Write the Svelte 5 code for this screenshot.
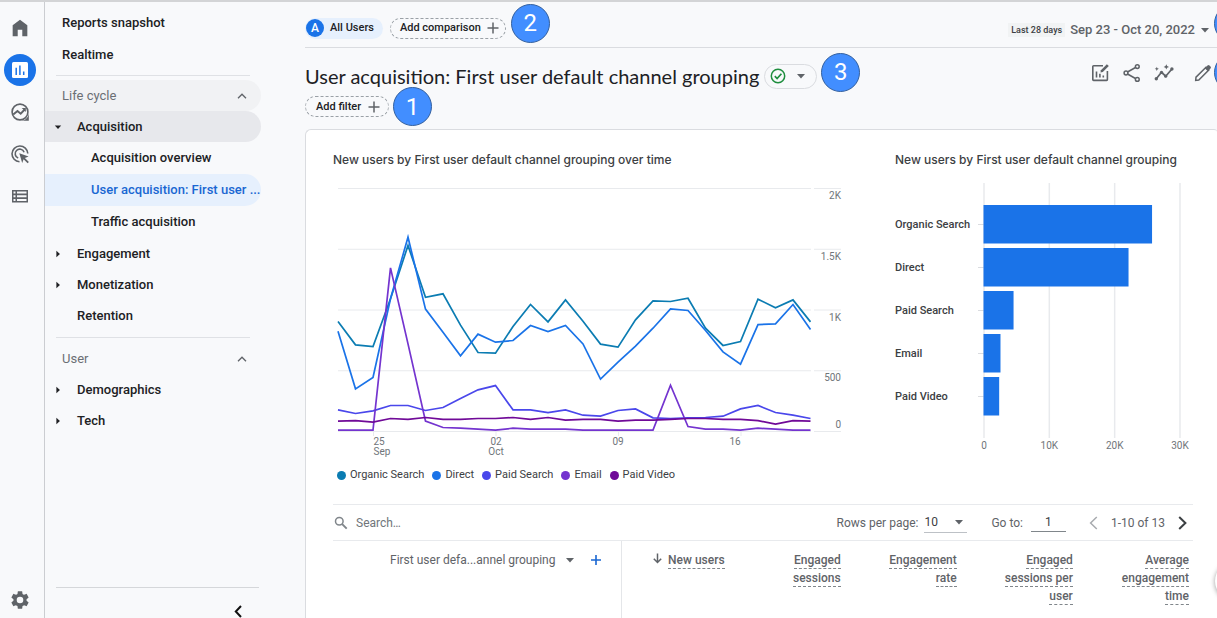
<script>
  const series = [
    { name: 'Organic Search', color: '#0b7cb2', values: [901, 709, 695, 1088, 1527, 1101, 1129, 871, 646, 641, 860, 1041, 898, 1079, 904, 715, 690, 915, 1071, 1066, 1093, 846, 704, 737, 1085, 1014, 1079, 898] },
    { name: 'Direct', color: '#1a73e8', values: [821, 347, 440, 1088, 1595, 1003, 813, 619, 797, 731, 745, 868, 819, 868, 717, 427, 566, 698, 846, 1005, 992, 827, 651, 550, 876, 882, 1041, 835] },
    { name: 'Paid Search', color: '#4a47eb', values: [174, 144, 166, 210, 210, 169, 193, 267, 339, 374, 174, 174, 152, 174, 130, 122, 169, 182, 108, 103, 108, 111, 122, 182, 210, 152, 130, 103] },
    { name: 'Email', color: '#7434cf', values: [7, 7, 7, 1343, 717, 81, 29, 23, 15, 7, 23, 15, 15, 15, 7, 7, 7, 7, 7, 377, 37, 15, 15, 7, 23, 15, 7, 7] },
    { name: 'Paid Video', color: '#700a98', values: [81, 86, 73, 103, 95, 111, 95, 95, 103, 103, 111, 95, 111, 89, 95, 95, 81, 89, 89, 95, 103, 103, 95, 95, 86, 56, 86, 81] }
  ];
  const lineX = (i) => 5 + i * 17.5;
  const lineY = (v) => 251 - v * 0.1215;
  const points = (values) => values.map((v, i) => `${lineX(i)},${lineY(v)}`).join(' ');
  const yTicks = [
    { value: 2000, label: '2K', drop: 11 },
    { value: 1500, label: '1.5K', drop: 11 },
    { value: 1000, label: '1K', drop: 11 },
    { value: 500, label: '500', drop: 11 },
    { value: 0, label: '0', drop: -3 }
  ];
  const xTicks = [
    { i: 2, x: 46, label: '25', month: 'Sep', monthX: 49 },
    { i: 9, x: 163, label: '02', month: 'Oct', monthX: 163 },
    { i: 16, x: 285, label: '09' },
    { i: 23, x: 402, label: '16' }
  ];

  const bars = [
    { name: 'Organic Search', value: 25.8 },
    { name: 'Direct', value: 22.2 },
    { name: 'Paid Search', value: 4.6 },
    { name: 'Email', value: 2.6 },
    { name: 'Paid Video', value: 2.4 }
  ];
  const barScale = 6.533;
  const barTicks = [0, 10, 20, 30];

  const metrics = [
    ['Engaged', 'sessions'],
    ['Engagement', 'rate'],
    ['Engaged', 'sessions per', 'user'],
    ['Average', 'engagement', 'time']
  ];
</script>

{#snippet caret(cls)}
  <svg class={cls} width="10" height="10" viewBox="0 0 10 10" aria-hidden="true"><path d="M1 3h8L5 7.4z" fill="currentColor" /></svg>
{/snippet}
{#snippet plus()}
  <svg width="12" height="12" viewBox="0 0 12 12" aria-hidden="true"><path d="M6 .5v11M.5 6h11" stroke="currentColor" stroke-width="1.5" /></svg>
{/snippet}
{#snippet chevron()}
  <svg width="10" height="6" viewBox="0 0 10 6" aria-hidden="true"><path d="M1 5.3 5 1.2l4 4.1" fill="none" stroke="#5f6368" stroke-width="1.3" /></svg>
{/snippet}

<div class="app">
  <nav class="rail" aria-label="Product areas">
    <a href="#home" aria-label="Home"><svg width="22" height="22" viewBox="0 0 24 24"><path d="M4 21V9l8-6 8 6v12h-5.5v-7h-5v7z" fill="#5f6368" /></svg></a>
    <a href="#reports" class="current" aria-label="Reports"><svg width="20" height="20" viewBox="0 0 20 20"><rect x="2" y="2" width="16" height="16" rx="1.5" fill="#fff" /><path d="M6.2 7.8V15M9.9 5.6V15M13.7 11.6V15" stroke="#1a73e8" stroke-width="1.5" /></svg></a>
    <a href="#explore" aria-label="Explore"><svg width="20" height="20" viewBox="0 0 20 20" fill="none" stroke="#5f6368"><circle cx="10" cy="10" r="7.9" stroke-width="1.6" /><path d="M18.8 11v7.8H11c4.5-.2 7.2-3 7.8-7.8z" fill="#5f6368" stroke="none" /><path d="m3.2 12.6 4.3-3.6 3.2 2.7 4-4.2" stroke-width="1.9" /><path d="M11.7 6h4.1v4.1z" fill="#5f6368" stroke="none" /></svg></a>
    <a href="#advertising" aria-label="Advertising"><svg width="20" height="20" viewBox="0 0 20 20" fill="none" stroke="#5f6368" stroke-width="1.6"><path d="M9.5 17.8A7.9 7.9 0 1 1 17.8 9.5" /><path d="M8.2 14.1A4.6 4.6 0 1 1 14.1 8.2" /><path d="m9.3 9.3 9.3 3.2-3.7 1.5 4 4-1.3 1.3-4-4-1.4 3.6z" fill="#5f6368" stroke="none" /></svg></a>
    <a href="#library" aria-label="Library"><svg width="20" height="20" viewBox="0 0 20 20"><path fill-rule="evenodd" fill="#5f6368" d="M2 4h16v12.5H2zM3.5 5.5v2h2v-2zM7 5.5v2h9.5v-2zM3.5 9.2v2h2v-2zM7 9.2v2h9.5v-2zM3.5 13v2h2v-2zM7 13v2h9.5v-2z" /></svg></a>
    <a href="#admin" class="admin" aria-label="Admin"><svg width="22" height="22" viewBox="0 0 24 24"><path fill="#5f6368" d="M19.14 12.94c.04-.3.06-.61.06-.94 0-.32-.02-.64-.07-.94l2.03-1.58c.18-.14.23-.41.12-.61l-1.92-3.32c-.12-.22-.37-.29-.59-.22l-2.39.96c-.5-.38-1.03-.7-1.62-.94l-.36-2.54c-.04-.24-.24-.41-.48-.41h-3.84c-.24 0-.43.17-.47.41l-.36 2.54c-.59.24-1.13.57-1.62.94l-2.39-.96c-.22-.08-.47 0-.59.22L2.74 8.87c-.12.21-.08.47.12.61l2.03 1.58c-.05.3-.09.63-.09.94s.02.64.07.94l-2.03 1.58c-.18.14-.23.41-.12.61l1.92 3.32c.12.22.37.29.59.22l2.39-.96c.5.38 1.03.7 1.62.94l.36 2.54c.05.24.24.41.48.41h3.84c.24 0 .44-.17.47-.41l.36-2.54c.59-.24 1.13-.56 1.62-.94l2.39.96c.22.08.47 0 .59-.22l1.92-3.32c.12-.22.07-.47-.12-.61zM12 15.6a3.6 3.6 0 1 1 0-7.2 3.6 3.6 0 0 1 0 7.2z" /></svg></a>
  </nav>

  <nav class="side" aria-label="Reports">
    <a href="#snapshot" class="row top">Reports snapshot</a>
    <a href="#realtime" class="row top">Realtime</a>
    <hr />
    <button class="row section hovered">Life cycle {@render chevron()}</button>
    <button class="row group open">{@render caret('tri')}Acquisition</button>
    <a href="#overview" class="row sub">Acquisition overview</a>
    <a href="#user-acquisition" class="row sub selected">User acquisition: First user ...</a>
    <a href="#traffic" class="row sub">Traffic acquisition</a>
    <button class="row group">{@render caret('tri right')}Engagement</button>
    <button class="row group">{@render caret('tri right')}Monetization</button>
    <a href="#retention" class="row group leaf">Retention</a>
    <hr class="second" />
    <button class="row section">User {@render chevron()}</button>
    <button class="row group">{@render caret('tri right')}Demographics</button>
    <button class="row group">{@render caret('tri right')}Tech</button>
    <div class="side-foot">
      <button aria-label="Collapse navigation"><svg width="8" height="13" viewBox="0 0 8 13"><path d="M7 1 1.8 6.5 7 12" fill="none" stroke="#111" stroke-width="2" /></svg></button>
    </div>
  </nav>

  <main>
    <header class="compare">
      <button class="chip all"><span class="avatar">A</span>All Users</button>
      <button class="chip dashed tight">Add comparison {@render plus()}</button>
      <span class="note">2</span>
      <button class="dates"><span class="badge">Last 28 days</span><span class="range">Sep 23 - Oct 20, 2022</span>{@render caret('')}</button>
    </header>

    <div class="heading">
      <h1>User acquisition: First user default channel grouping</h1>
      <button class="status" aria-label="Data quality">
        <svg width="16" height="16" viewBox="0 0 16 16" fill="none" stroke="#1e8e3e"><circle cx="8" cy="8" r="6.7" stroke-width="1.5" /><path d="m4.8 8.2 2.3 2.3 4.3-4.7" stroke-width="1.7" /></svg>
        {@render caret('')}
      </button>
      <span class="note">3</span>
      <div class="tools">
        <button aria-label="Customize report"><svg width="20" height="20" viewBox="0 0 20 20" fill="none" stroke="#5f6368" stroke-width="1.6"><path d="M13 2.8H3.6a.8.8 0 0 0-.8.8v13a.8.8 0 0 0 .8.8h13a.8.8 0 0 0 .8-.8V8" /><path d="M6.5 8.5v6M9.9 10.8v3.7M13.3 12.5v2" /><path d="m10.5 9.5.4-2.3 6-6 1.9 1.9-6 6z" fill="#5f6368" stroke="none" /></svg></button>
        <button aria-label="Share"><svg width="20" height="20" viewBox="0 0 20 20" fill="none" stroke="#5f6368" stroke-width="1.5"><path d="m5.5 9 8-4.5M5.5 11l8 4.5" /><circle cx="4" cy="10" r="1.9" /><circle cx="15.3" cy="3.6" r="1.9" /><circle cx="15.3" cy="16.4" r="1.9" /></svg></button>
        <button aria-label="Insights"><svg width="20" height="20" viewBox="0 0 20 20"><path d="m2.5 15.5 5-6.2 4.2 3.9 6-7" fill="none" stroke="#5f6368" stroke-width="1.7" /><g fill="#5f6368"><circle cx="2.3" cy="15.7" r="1.7" /><circle cx="7.5" cy="9.3" r="1.6" /><circle cx="11.7" cy="13.2" r="1.6" /><circle cx="17.9" cy="6" r="1.7" /><path d="m12.3 1.2.8 1.9 1.9.8-1.9.8-.8 1.9-.8-1.9-1.9-.8 1.9-.8zM2.8 3.7l.6 1.5 1.5.6-1.5.6-.6 1.5-.6-1.5-1.5-.6 1.5-.6z" /></g></svg></button>
        <button class="edit" aria-label="Edit"><svg width="20" height="20" viewBox="0 0 20 20"><path d="m2.7 17.3.3-3.1L13 4.2l2.8 2.8-10 10z" fill="none" stroke="#5f6368" stroke-width="1.5" /><path d="m11.8 5.2 2.7-2.7a1.4 1.4 0 0 1 2 0l1 1a1.4 1.4 0 0 1 0 2l-2.7 2.7z" fill="#5f6368" /></svg></button>
      </div>
    </div>

    <div class="filters">
      <button class="chip dashed">Add filter {@render plus()}</button>
      <span class="note">1</span>
    </div>

    <section class="card">
      <div class="charts">
        <div>
          <h2>New users by First user default channel grouping over time</h2>
          <svg class="plot" viewBox="0 0 517 280" role="img" aria-label="New users over time">
            {#each yTicks as t}
              <path d="M5 {lineY(t.value) + 0.5}H478M481 {lineY(t.value) + 0.5}H508" stroke="#e8eaed" />
              <text x="508" y={lineY(t.value) + t.drop} text-anchor="end">{t.label}</text>
            {/each}
            {#each xTicks as t}
              <path d="M{lineX(t.i) + 0.5} 251v5" stroke="#e8eaed" />
              <text x={t.x} y="265" text-anchor="middle">{t.label}</text>
              {#if t.month}<text x={t.monthX} y="275" text-anchor="middle">{t.month}</text>{/if}
            {/each}
            {#each series as s}
              <polyline points={points(s.values)} fill="none" stroke={s.color} stroke-width="1.7" />
            {/each}
          </svg>
          <ul class="legend">
            {#each series as s}<li><i style="background:{s.color}"></i>{s.name}</li>{/each}
          </ul>
        </div>
        <div>
          <h2>New users by First user default channel grouping</h2>
          <svg class="plot" viewBox="0 0 298 280" role="img" aria-label="New users by channel">
            {#each barTicks as t}
              <path d="M{89 + t * barScale} 3V258" stroke="#e8eaed" stroke-width="1.5" />
              <text x={89 + t * barScale} y="269" text-anchor="middle">{t ? t + 'K' : 0}</text>
            {/each}
            {#each bars as b, i}
              <path d="M83 {44.5 + i * 43}h6" stroke="#dadce0" />
              <text class="name" x="0" y={48 + i * 43}>{b.name}</text>
              <rect x="88.5" y={25 + i * 43} width={b.value * barScale} height="38.5" fill="#1a73e8" />
            {/each}
          </svg>
        </div>
      </div>

      <div class="controls">
        <svg width="14" height="14" viewBox="0 0 14 14" fill="none" stroke="#80868b"><circle cx="5.3" cy="5.3" r="3.8" stroke-width="1.5" /><path d="m8.2 8.2 4.5 4.5" stroke-width="1.9" /></svg>
        <input class="search" type="text" aria-label="Search" placeholder="Search…" />
        <label for="rows">Rows per page:</label>
        <span class="pick"><select id="rows"><option>10</option><option>25</option><option>50</option></select>{@render caret('')}</span>
        <label for="goto" class="goto">Go to:</label>
        <input id="goto" type="text" value="1" />
        <button class="prev" aria-label="Previous page"><svg width="9" height="14" viewBox="0 0 9 14"><path d="M7.8 1 1.6 7l6.2 6" fill="none" stroke="#a8abaf" stroke-width="1.5" /></svg></button>
        <span class="count">1-10 of 13</span>
        <button aria-label="Next page"><svg width="9" height="14" viewBox="0 0 9 14"><path d="m1.2 1 6.2 6-6.2 6" fill="none" stroke="#3c4043" stroke-width="2" /></svg></button>
      </div>

      <table>
        <colgroup><col class="c-dim" /><col class="c-first" /><col /><col /><col /><col /></colgroup>
        <thead>
          <tr>
            <th class="dim" scope="col">
              <div><button class="dimension">First user defa...annel grouping {@render caret('')}</button>
              <button class="add" aria-label="Add dimension"><svg width="10" height="10" viewBox="0 0 10 10"><path d="M5 0v10M0 5h10" stroke="#1a67d2" stroke-width="1.6" /></svg></button></div>
            </th>
            <th class="first" scope="col"><svg width="9" height="11" viewBox="0 0 9 11"><path d="M4.5.5v9M.8 5.7l3.7 3.8 3.7-3.8" fill="none" stroke="#5f6368" stroke-width="1.5" /></svg><span>New users</span></th>
            {#each metrics as m}
              <th scope="col">{#each m as line, i}{#if i}<br />{/if}<span>{line}</span>{/each}</th>
            {/each}
          </tr>
        </thead>
      </table>
    </section>

    <span class="note edge e1"></span>
    <span class="note edge e2"></span>
    <span class="fab"></span>
  </main>
</div>

<style>
  :global(body) { margin: 0; background: #f8f9fb; }
  .app {
    display: flex; box-sizing: border-box; height: 100vh; overflow: hidden;
    border-top: 2px solid #d3d4d6; background: #f8f9fb; color: #202124;
    font: 400 12px/16px Roboto, sans-serif;
  }
  button { border: 0; padding: 0; background: none; font: inherit; color: inherit; cursor: pointer; }
  a { color: inherit; text-decoration: none; }
  svg { flex: none; display: block; }

  .rail {
    display: flex; flex-direction: column; align-items: center; gap: 10px; flex: none;
    width: 40px; padding: 10px 4px 2px 0; border-right: 1px solid #cbcdd1;
  }
  .rail a { display: grid; place-items: center; width: 32px; height: 32px; border-radius: 50%; }
  .rail .current { background: #1a73e8; }
  .rail .admin { margin-top: auto; }

  .side {
    display: flex; flex-direction: column; flex: none; width: 216px; margin-right: 44px; padding-top: 5px;
    font: 500 13px/20px Roboto, sans-serif;
  }
  .row {
    display: flex; align-items: center; flex: none; box-sizing: border-box; height: 31px;
    padding: 0 12px 0 17px; border-radius: 0 16px 16px 0; text-align: left; white-space: nowrap;
  }
  .row.top { height: 32px; }
  .row.section { justify-content: space-between; padding-right: 14px; color: #6b6f74; font-weight: 400; }
  .row.hovered { background: #f1f2f4; }
  .row.group { padding-left: 8px; gap: 14px; }
  .row.open { background: #e7e8ec; }
  .row.group.leaf { padding-left: 32px; }
  .row.sub { height: 32px; padding: 0 0 0 46px; }
  .row.selected { background: #e6f0fd; color: #1967d2; }
  .side :global(.tri) { width: 8px; height: 8px; margin-left: 1px; margin-right: 1px; }
  .side :global(.right) { transform: rotate(-90deg); }
  .side hr { width: 194px; margin: 4px 0 4px 11px; border: 0; border-top: 1px solid #dfe1e5; flex: none; }
  .side .second { margin: 6px 0 5px 11px; }
  .side-foot { display: flex; justify-content: flex-end; margin: auto 2px 0 11px; padding: 17px 17px 0 0; border-top: 1px solid #d5d7da; }

  main { position: relative; display: flex; flex-direction: column; flex: 1; min-width: 0; }
  .compare, .heading, .filters { display: flex; align-items: center; flex: none; box-sizing: border-box; }
  .compare { gap: 7px; height: 46px; padding-top: 7px; border-bottom: 1px solid #dadce0; }
  .chip { display: flex; align-items: center; box-sizing: border-box; height: 21px; border-radius: 11px; font-size: 11px; font-weight: 500; white-space: nowrap; }
  .all { gap: 6px; padding: 0 9px 0 1px; background: #e6f0fd; }
  .avatar { display: grid; place-items: center; width: 18px; height: 18px; border-radius: 50%; background: #1a73e8; color: #fff; font-size: 12px; }
  .dashed { gap: 7px; padding: 0 8px 0 10px; border: 1px dashed #9aa0a6; }
  .tight { gap: 6px; padding: 0 6px 0 9px; }
  .dashed :global(svg) { color: #5f6368; }
  .note {
    display: grid; place-items: center; box-sizing: border-box; flex: none; width: 39px; height: 39px; margin: -9px 0;
    border: 1px solid #33609f; border-radius: 50%; background: #428eff; color: #fff; font: 400 24px/28px Roboto, sans-serif;
  }
  .compare .note { position: relative; top: -5px; margin-left: -2px; }
  .dates { display: flex; align-items: center; gap: 5px; margin-left: auto; padding: 3px 7px 0 0; color: #5f6368; }
  .badge { padding: 0 3px; background: #f1f3f4; color: #3c4043; font: 500 9px/14px Roboto, sans-serif; }
  .range { font: 500 13px/18px Roboto, sans-serif; }

  .heading { height: 48px; padding-top: 8px; }
  h1 { margin: 0; font: 400 20px/26px Lato, sans-serif; white-space: nowrap; }
  .status { display: flex; align-items: center; gap: 10px; box-sizing: border-box; height: 25px; margin-left: 5px; padding: 0 10px 0 5px; border: 1px solid #dadce0; border-radius: 13px; color: #5f6368; }
  .heading .note { position: relative; top: -4px; margin-left: 4px; }
  .tools { display: flex; gap: 12px; margin: -7px 4px 0 auto; }
  .tools .edit { margin-left: 7px; }

  .filters { gap: 4px; height: 21px; }

  .card { flex: 1; margin-top: 12px; padding: 20px 24px 0 27px; border: solid #dadce0; border-width: 1px 0 0 1px; border-radius: 6px 3px 0 0; background: #fff; }
  .charts { display: grid; grid-template-columns: 517fr 298fr; gap: 45px; }
  h2 { margin: 0; font: 500 12px/20px Inter, sans-serif; color: #3c4043; white-space: nowrap; }
  .plot { width: 100%; margin-top: 10px; overflow: visible; }
  .plot text { fill: #70757a; font: 400 10px Roboto, sans-serif; }
  .plot .name { fill: #3c4043; font-size: 11px; font-weight: 500; }
  .legend { display: flex; gap: 8px; margin: 7px 0 0 4px; padding: 0; list-style: none; font-size: 11px; line-height: 16px; color: #3c4043; white-space: nowrap; }
  .legend li { display: flex; align-items: center; gap: 4px; }
  .legend i { width: 9px; height: 9px; border-radius: 50%; }

  .controls { display: flex; align-items: center; height: 35px; margin-top: 21px; border: solid #e8eaed; border-width: 1px 0; color: #5f6368; }
  .controls > svg { margin-left: 1px; }
  input, select { border: 0; outline: 0; padding: 0; background: none; font: inherit; color: #3c4043; }
  .search { flex: 1; min-width: 0; margin-left: 8px; }
  .search::placeholder { color: #70757a; opacity: 1; }
  .pick { display: flex; align-items: center; margin-left: 6px; padding-right: 3px; border-bottom: 1px solid #bdc1c6; height: 20px; }
  select { width: 30px; appearance: none; }
  .goto { margin-left: 24px; }
  #goto { width: 35px; height: 17px; margin-left: 8px; border-bottom: 1px solid #80868b; text-align: center; }
  .prev { margin-left: 23px; }
  .count { margin: 0 13px; }
  .controls button:last-child { margin-right: 6px; }

  table { width: 100%; height: 80px; border-collapse: collapse; table-layout: fixed; }
  col { width: 13.5%; }
  .c-dim { width: 33.6%; }
  .c-first { width: 12.4%; }
  th { padding: 10px 4px 0 0; vertical-align: top; text-align: right; color: #5f6368; font: 500 12px/18px Roboto, sans-serif; white-space: nowrap; }
  th span { padding-bottom: 1px; border-bottom: 1px dashed #80868b; }
  .dim { border-right: 1px solid #e4e6e9; font-weight: 400; }
  .dim div { display: flex; justify-content: flex-end; gap: 16px; padding-right: 16px; }
  .dimension { display: flex; align-items: center; gap: 10px; }
  .first svg { display: inline-block; margin-right: 6px; }

  .edge { position: absolute; right: -36px; margin: 0; }
  .e1 { top: 2px; }
  .e2 { top: 51px; }
  .fab { position: absolute; top: 560px; right: -36px; width: 38px; height: 38px; border-radius: 50%; background: #fff; box-shadow: 0 1px 5px #0006; }
</style>
